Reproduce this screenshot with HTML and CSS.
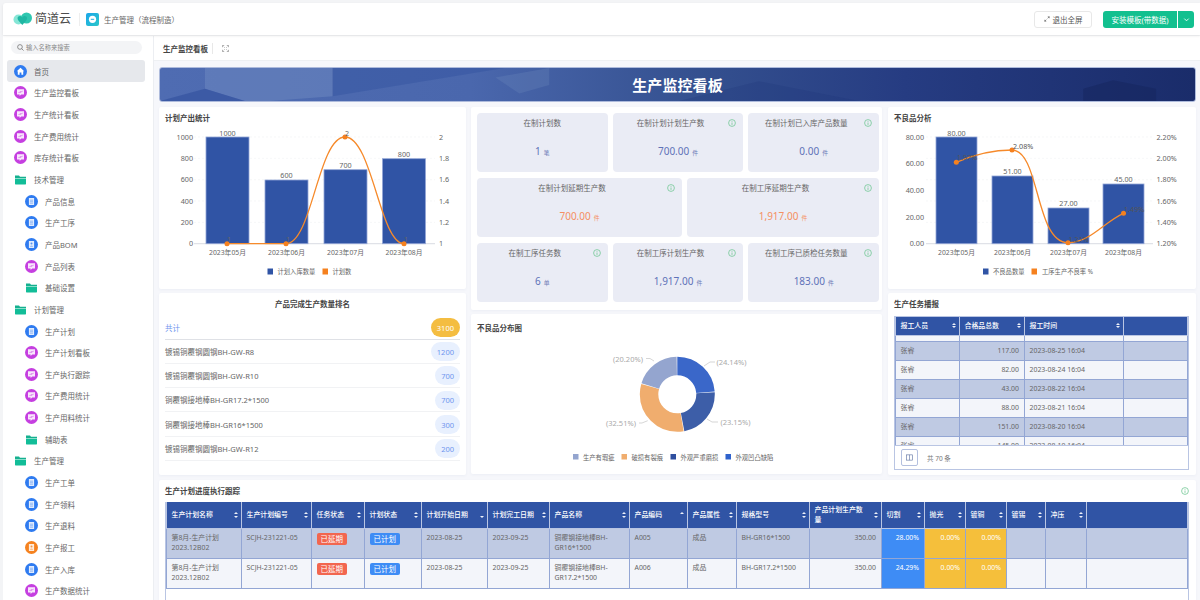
FILE: index.html
```html
<!DOCTYPE html>
<html lang="zh-CN">
<head>
<meta charset="utf-8">
<title>生产监控看板</title>
<link rel="stylesheet" href="styles.css">
</head>
<body>
<svg class="sprite" aria-hidden="true">
  <symbol id="i-home" viewBox="0 0 13 13"><circle cx="6.5" cy="6.5" r="6.5" fill="currentColor"/><path d="M6.5 2.8 10.2 6.2H9.2V9.8H7.4V7.6H5.6V9.8H3.8V6.2H2.8Z" fill="#fff"/></symbol>
  <symbol id="i-doc" viewBox="0 0 13 13"><circle cx="6.5" cy="6.5" r="6.5" fill="currentColor"/><path d="M3.9 3h5.2v7H3.9Z" fill="#fff" opacity=".85"/><path d="M5 5.2h3M5 6.7h3M5 8.2h3" stroke="currentColor" stroke-width=".6" opacity=".7"/></symbol>
  <symbol id="i-form" viewBox="0 0 13 13"><circle cx="6.5" cy="6.5" r="6.5" fill="currentColor"/><path d="M3.9 3h5.2v7H3.9Z" fill="#fff" opacity=".85"/><circle cx="6.5" cy="5.5" r="1" fill="currentColor" opacity=".8"/><path d="M4.9 8.6c.3-1.2 2.9-1.2 3.2 0Z" fill="currentColor" opacity=".8"/></symbol>
  <symbol id="i-screen" viewBox="0 0 13 13"><circle cx="6.5" cy="6.5" r="6.5" fill="currentColor"/><path d="M3 3.2h7v5.2H7.2L5.6 10V8.4H3Z" fill="#fff" opacity=".88"/><path d="M4.6 7 6 5.6l1 .8 1.6-1.6" fill="none" stroke="currentColor" stroke-width=".7"/></symbol>
  <symbol id="i-folder" viewBox="0 0 13 13"><path d="M1 2.6h4l1 1.2h6V5H1Z" fill="#15b08f"/><path d="M1 5.4h11v5.4a.6.6 0 0 1-.6.6H1.6a.6.6 0 0 1-.6-.6Z" fill="#12bd98"/></symbol>
  <symbol id="i-info" viewBox="0 0 8 8"><circle cx="4" cy="4" r="3.4" fill="none" stroke="#74c895" stroke-width=".8"/><path d="M4 3.5v2.4M4 2.2v.7" stroke="#74c895" stroke-width=".8"/></symbol>
</svg>

<header class="topbar">
  <svg class="logo" viewBox="0 0 19 14" aria-hidden="true"><circle cx="5.5" cy="7.500" r="5" fill="#86e6d6"/><circle cx="13.500" cy="6" r="5.500" fill="#2fc7b0"/><path d="M5.300 4.500c1.500-1.200 3.200-.4 4 1 .8-1.400 2.500-2.200 4-1 1.400 1.300.6 3.300-.5 4.400L9.300 13 5.800 8.900C4.700 7.800 3.900 5.800 5.300 4.500Z" fill="#1fb7a3"/></svg>
  <span class="brand">简道云</span>
  <span class="top-sep"></span>
  <svg class="app-icon" viewBox="0 0 13 13" aria-hidden="true"><defs><linearGradient id="appg" x1="0" y1="0" x2="1" y2="1"><stop offset="0" stop-color="#1aa6ea"/><stop offset="1" stop-color="#2bc7c9"/></linearGradient></defs><rect width="13" height="13" rx="2" fill="url(#appg)"/><circle cx="6.500" cy="6.300" r="3.600" fill="#fff"/><path d="M4.800 6.300h3.400" stroke="#1eaee0" stroke-width="1"/></svg>
  <span class="app-name">生产管理（流程制造）</span>
  <span class="top-fill"></span>
  <button class="btn-exit"><svg class="exit-ic" viewBox="0 0 8 8" aria-hidden="true"><path d="M1 7 3.200 4.800M1 5v2h2M7 1 4.800 3.200M7 3V1H5" fill="none" stroke="#555" stroke-width=".8"/></svg>退出全屏</button>
  <div class="btn-install"><span class="btn-main">安装模板(带数据)</span><span class="btn-more"><svg class="chev" viewBox="0 0 8 8" aria-hidden="true"><path d="M1.500 3 4 5.500 6.500 3" fill="none" stroke="#fff" stroke-width="1"/></svg></span></div>
</header>

<div class="shell">
  <aside class="sidebar">
    <div class="search"><svg class="search-ic" viewBox="0 0 8 8" aria-hidden="true"><circle cx="3.400" cy="3.400" r="2.700" fill="none" stroke="#666" stroke-width=".8"/><path d="M5.400 5.400 7.500 7.500" stroke="#666" stroke-width=".8"/></svg><span>输入名称来搜索</span></div>
    <nav class="nav">
      <a class="item active c-blue"><svg class="ic"><use href="#i-home"/></svg>首页</a>
      <a class="item c-purple"><svg class="ic"><use href="#i-screen"/></svg>生产监控看板</a>
      <a class="item c-purple"><svg class="ic"><use href="#i-screen"/></svg>生产统计看板</a>
      <a class="item c-purple"><svg class="ic"><use href="#i-screen"/></svg>生产费用统计</a>
      <a class="item c-purple"><svg class="ic"><use href="#i-screen"/></svg>库存统计看板</a>
      <a class="item"><svg class="ic"><use href="#i-folder"/></svg>技术管理</a>
      <a class="item sub c-blue"><svg class="ic"><use href="#i-doc"/></svg>产品信息</a>
      <a class="item sub c-blue"><svg class="ic"><use href="#i-doc"/></svg>生产工序</a>
      <a class="item sub c-blue"><svg class="ic"><use href="#i-form"/></svg>产品BOM</a>
      <a class="item sub c-purple"><svg class="ic"><use href="#i-screen"/></svg>产品列表</a>
      <a class="item sub"><svg class="ic"><use href="#i-folder"/></svg>基础设置</a>
      <a class="item"><svg class="ic"><use href="#i-folder"/></svg>计划管理</a>
      <a class="item sub c-blue"><svg class="ic"><use href="#i-doc"/></svg>生产计划</a>
      <a class="item sub c-purple"><svg class="ic"><use href="#i-screen"/></svg>生产计划看板</a>
      <a class="item sub c-purple"><svg class="ic"><use href="#i-screen"/></svg>生产执行跟踪</a>
      <a class="item sub c-purple"><svg class="ic"><use href="#i-screen"/></svg>生产费用统计</a>
      <a class="item sub c-purple"><svg class="ic"><use href="#i-screen"/></svg>生产用料统计</a>
      <a class="item sub"><svg class="ic"><use href="#i-folder"/></svg>辅助表</a>
      <a class="item"><svg class="ic"><use href="#i-folder"/></svg>生产管理</a>
      <a class="item sub c-blue"><svg class="ic"><use href="#i-doc"/></svg>生产工单</a>
      <a class="item sub c-blue"><svg class="ic"><use href="#i-doc"/></svg>生产领料</a>
      <a class="item sub c-blue"><svg class="ic"><use href="#i-doc"/></svg>生产退料</a>
      <a class="item sub c-orange"><svg class="ic"><use href="#i-form"/></svg>生产报工</a>
      <a class="item sub c-blue"><svg class="ic"><use href="#i-doc"/></svg>生产入库</a>
      <a class="item sub c-purple"><svg class="ic"><use href="#i-screen"/></svg>生产数据统计</a>
    </nav>
  </aside>

  <main class="main">
    <div class="crumb">
      <span class="crumb-title">生产监控看板</span>
      <span class="crumb-sep"></span>
      <svg class="fs-ic" viewBox="0 0 8 8" aria-hidden="true"><path d="M.5 2.500V.5h2M5.500.5h2v2M7.500 5.500v2h-2M2.500 7.500h-2v-2M2 2l1 1M6 2 5 3M6 6 5 5M2 6l1-1" fill="none" stroke="#777" stroke-width=".7"/></svg>
    </div>
    <div class="content">
      <div class="banner">
        <svg class="banner-art" viewBox="0 0 1037 35" preserveAspectRatio="none" aria-hidden="true">
          <path d="M45 0H173V30L110 35H85L45 22Z" fill="#7f98c8" opacity=".35"/>
          <path d="M0 35 45 22 85 35Z" fill="#3453a0" opacity=".7"/>
          <path d="M173 0H345L173 30Z" fill="#2f4f9e" opacity=".4"/>
          <path d="M336 10 390 0V18L360 27Z" fill="#7d95c6" opacity=".22"/>
          <path d="M925 35V22L955 13 998 22V35Z" fill="#15265f" opacity=".55"/>
          <path d="M520 35 600 14 700 35Z" fill="#1c3078" opacity=".22"/>
        </svg>
        <h1 class="banner-title">生产监控看板</h1>
      </div>

      <div class="dash">
        <div class="col">
          <section class="card card-chart">
            <h2 class="card-title">计划产出统计</h2>
            <svg class="chart" viewBox="159 124 307 165" role="img" aria-label="计划产出统计">
              <g class="grid"><path d="M194 137H435M194 158.300H435M194 179.700H435M194 201H435M194 222.400H435"/></g>
              <path class="axis" d="M194 243.700H435"/>
              <g class="bars">
                <rect x="206" y="137" width="43" height="106.700"/>
                <rect x="265" y="180" width="43" height="63.700"/>
                <rect x="324" y="169.700" width="43" height="74"/>
                <rect x="382.500" y="158.700" width="43" height="85"/>
              </g>
              <path class="line" d="M227 243.700H286C312 243.700 318 137 345 137C372 137 380 243.700 404 243.700"/>
              <g class="dots"><circle cx="227" cy="243.700" r="2.500"/><circle cx="286" cy="243.700" r="2.500"/><circle cx="345" cy="137" r="2.500"/><circle cx="404" cy="243.700" r="2.500"/></g>
              <g class="tx end"><text x="193" y="139.600">1000</text><text x="193" y="161">800</text><text x="193" y="182.300">600</text><text x="193" y="203.600">400</text><text x="193" y="225">200</text><text x="193" y="246.300">0</text></g>
              <g class="tx"><text x="439" y="139.600">2</text><text x="439" y="161">1.8</text><text x="439" y="182.300">1.6</text><text x="439" y="203.600">1.4</text><text x="439" y="225">1.2</text><text x="439" y="246.300">1</text></g>
              <g class="tx mid"><text x="227.500" y="135.500">1000</text><text x="286.500" y="178">600</text><text x="345.500" y="167.700">700</text><text x="404" y="156.700">800</text><text x="347" y="135.500">2</text><text x="229" y="242">1</text><text x="288" y="242">1</text><text x="406" y="242">1</text></g>
              <g class="tx mid xl"><text x="227.500" y="254.500">2023年05月</text><text x="286.500" y="254.500">2023年06月</text><text x="345.500" y="254.500">2023年07月</text><text x="404" y="254.500">2023年08月</text></g>
              <rect class="lg-blue" x="267.500" y="268.500" width="5.500" height="6"/><text class="tx lg" x="277.500" y="274">计划入库数量</text>
              <rect class="lg-orange" x="322.500" y="268.500" width="5.500" height="6"/><text class="tx lg" x="332.500" y="274">计划数</text>
            </svg>
          </section>

          <section class="card card-rank">
            <h2 class="card-title center">产品完成生产数量排名</h2>
            <ul class="rank">
              <li class="rank-row total"><span>共计</span><b class="pill gold">3100</b></li>
              <li class="rank-row"><span>镀锡铜覆钢圆钢BH-GW-R8</span><b class="pill">1200</b></li>
              <li class="rank-row"><span>镀锡铜覆钢圆钢BH-GW-R10</span><b class="pill">700</b></li>
              <li class="rank-row"><span>铜覆钢接地棒BH-GR17.2*1500</span><b class="pill">700</b></li>
              <li class="rank-row"><span>铜覆钢接地棒BH-GR16*1500</span><b class="pill">300</b></li>
              <li class="rank-row"><span>镀锡铜覆钢圆钢BH-GW-R12</span><b class="pill">200</b></li>
            </ul>
          </section>
        </div>

        <div class="col">
          <section class="card card-stats">
            <div class="tile-row">
              <div class="tile"><div class="tile-head"><span>在制计划数</span></div><div class="tile-val">1<small>笔</small></div></div>
              <div class="tile"><div class="tile-head"><span>在制计划计划生产数</span><svg class="info"><use href="#i-info"/></svg></div><div class="tile-val">700.00<small>件</small></div></div>
              <div class="tile"><div class="tile-head"><span>在制计划已入库产品数量</span><svg class="info"><use href="#i-info"/></svg></div><div class="tile-val">0.00<small>件</small></div></div>
            </div>
            <div class="tile-row">
              <div class="tile wide-a warn"><div class="tile-head"><span>在制计划延期生产数</span><svg class="info"><use href="#i-info"/></svg></div><div class="tile-val">700.00<small>件</small></div></div>
              <div class="tile wide-b warn"><div class="tile-head"><span>在制工序延期生产数</span><svg class="info"><use href="#i-info"/></svg></div><div class="tile-val">1,917.00<small>件</small></div></div>
            </div>
            <div class="tile-row">
              <div class="tile"><div class="tile-head"><span>在制工序任务数</span><svg class="info"><use href="#i-info"/></svg></div><div class="tile-val">6<small>单</small></div></div>
              <div class="tile"><div class="tile-head"><span>在制工序计划生产数</span><svg class="info"><use href="#i-info"/></svg></div><div class="tile-val">1,917.00<small>件</small></div></div>
              <div class="tile"><div class="tile-head"><span>在制工序已质检任务数量</span><svg class="info"><use href="#i-info"/></svg></div><div class="tile-val">183.00<small>件</small></div></div>
            </div>
          </section>

          <section class="card card-pie">
            <h2 class="card-title">不良品分布图</h2>
            <svg class="chart" viewBox="471 338 411 137" role="img" aria-label="不良品分布图">
              <g class="donut">
                <circle class="s1" cx="677.300" cy="395.300" r="28.250" pathLength="100"/>
                <circle class="s2" cx="677.300" cy="395.300" r="28.250" pathLength="100"/>
                <circle class="s3" cx="677.300" cy="395.300" r="28.250" pathLength="100"/>
                <circle class="s4" cx="677.300" cy="395.300" r="28.250" pathLength="100"/>
              </g>
              <path class="leader" d="M704 367 710 363H715M707 420 712 423H718M647.700 421.700 642 424H639M654 362 650 359.500H646"/>
              <g class="tx pct"><text x="716.500" y="365.500">(24.14%)</text><text x="720.500" y="425.500">(23.15%)</text><text x="606" y="427">(32.51%)</text><text x="613" y="362.500">(20.20%)</text></g>
              <rect class="lg-a" x="573" y="455" width="5.500" height="5.500"/><text class="tx lg" x="583" y="460.500">生产有瑕疵</text>
              <rect class="lg-b" x="621.500" y="455" width="5.500" height="5.500"/><text class="tx lg" x="631.500" y="460.500">破损有裂痕</text>
              <rect class="lg-c" x="670.500" y="455" width="5.500" height="5.500"/><text class="tx lg" x="680.500" y="460.500">外观严重磨损</text>
              <rect class="lg-d" x="725.500" y="455" width="5.500" height="5.500"/><text class="tx lg" x="735.500" y="460.500">外观凹凸缺陷</text>
            </svg>
          </section>
        </div>

        <div class="col col-right">
          <section class="card card-chart">
            <h2 class="card-title">不良品分析</h2>
            <svg class="chart" viewBox="888 124 308 165" role="img" aria-label="不良品分析">
              <g class="grid"><path d="M926 137H1153M926 158.300H1153M926 179.700H1153M926 201H1153M926 222.400H1153"/></g>
              <path class="axis" d="M926 243.700H1153"/>
              <g class="bars">
                <rect x="936" y="137" width="41" height="106.700"/>
                <rect x="992" y="176" width="41" height="67.700"/>
                <rect x="1048" y="208" width="41" height="35.700"/>
                <rect x="1103" y="184" width="41" height="59.700"/>
              </g>
              <path class="line" d="M956.300 162.300C980 152 998 150 1012 150C1040 150 1035 242.700 1068 242.700C1090 242.700 1104 222 1123.500 213.300"/>
              <g class="dots"><circle cx="956.300" cy="162.300" r="2.500"/><circle cx="1012" cy="150" r="2.500"/><circle cx="1068" cy="242.700" r="2.500"/><circle cx="1123.500" cy="213.300" r="2.500"/></g>
              <g class="tx end"><text x="924" y="139.600">80.00</text><text x="924" y="166.300">60.00</text><text x="924" y="193">40.00</text><text x="924" y="219.600">20.00</text><text x="924" y="246.300">0.00</text></g>
              <g class="tx"><text x="1156.500" y="139.600">2.20%</text><text x="1156.500" y="161">2.00%</text><text x="1156.500" y="182.300">1.80%</text><text x="1156.500" y="203.600">1.60%</text><text x="1156.500" y="225">1.40%</text><text x="1156.500" y="246.300">1.20%</text></g>
              <g class="tx mid"><text x="956.500" y="135.500">80.00</text><text x="1012.500" y="174">51.00</text><text x="1068.500" y="206">27.00</text><text x="1123.500" y="182">45.00</text></g>
              <g class="tx dk"><text x="957" y="160">1.97%</text><text x="1013" y="148.500">2.08%</text><text x="1068.500" y="241.500">1.21%</text><text x="1124" y="211.500">1.49%</text></g>
              <g class="tx mid xl"><text x="956.500" y="254.500">2023年05月</text><text x="1012.500" y="254.500">2023年06月</text><text x="1068.500" y="254.500">2023年07月</text><text x="1123.500" y="254.500">2023年08月</text></g>
              <rect class="lg-blue" x="983" y="268.500" width="5.500" height="6"/><text class="tx lg" x="993" y="274">不良品数量</text>
              <rect class="lg-orange" x="1031.500" y="268.500" width="5.500" height="6"/><text class="tx lg" x="1042" y="274">工序生产不良率 %</text>
            </svg>
          </section>

          <section class="card card-report">
            <h2 class="card-title">生产任务播报</h2>
            <div class="report-box">
              <div class="report-scroll">
                <table class="dt report">
                  <colgroup><col class="r1"><col class="r2"><col class="r3"><col></colgroup>
                  <thead><tr><th><div class="th"><span>报工人员</span><i class="sort"></i></div></th><th><div class="th"><span>合格品总数</span><i class="sort"></i></div></th><th><div class="th"><span>报工时间</span><i class="sort"></i></div></th><th></th></tr></thead>
                  <tbody>
                    <tr class="stub"><td></td><td></td><td></td><td></td></tr>
                    <tr class="dark"><td>张睿</td><td class="num">117.00</td><td>2023-08-25 16:04</td><td></td></tr>
                    <tr><td>张睿</td><td class="num">82.00</td><td>2023-08-24 16:04</td><td></td></tr>
                    <tr class="dark"><td>张睿</td><td class="num">43.00</td><td>2023-08-22 16:04</td><td></td></tr>
                    <tr><td>张睿</td><td class="num">88.00</td><td>2023-08-21 16:04</td><td></td></tr>
                    <tr class="dark"><td>张睿</td><td class="num">151.00</td><td>2023-08-20 16:04</td><td></td></tr>
                    <tr><td>张睿</td><td class="num">145.00</td><td>2023-08-19 16:04</td><td></td></tr>
                  </tbody>
                </table>
              </div>
              <div class="report-foot"><span class="col-btn"><svg class="col-ic" viewBox="0 0 8 8" aria-hidden="true"><rect x=".5" y="1" width="7" height="6" fill="none" stroke="#5a6f9f" stroke-width=".7"/><path d="M4 1v6" stroke="#5a6f9f" stroke-width=".7"/></svg></span><span class="foot-text">共 70 条</span></div>
            </div>
          </section>
        </div>
      </div>

      <section class="card card-plan">
        <div class="plan-head"><h2 class="card-title">生产计划进度执行跟踪</h2><svg class="info plan-info"><use href="#i-info"/></svg></div>
        <div class="plan-box">
          <table class="dt plan">
            <colgroup><col class="p1"><col class="p2"><col class="p3"><col class="p4"><col class="p5"><col class="p6"><col class="p7"><col class="p8"><col class="p9"><col class="p10"><col class="p11"><col class="p12"><col class="p13"><col class="p14"><col class="p15"><col class="p16"><col></colgroup>
            <thead><tr>
              <th><div class="th"><span>生产计划名称</span><i class="sort"></i></div></th>
              <th><div class="th"><span>生产计划编号</span><i class="sort"></i></div></th>
              <th><div class="th"><span>任务状态</span><i class="sort"></i></div></th>
              <th><div class="th"><span>计划状态</span><i class="sort"></i></div></th>
              <th><div class="th"><span>计划开始日期</span><i class="sort down"></i></div></th>
              <th><div class="th"><span>计划完工日期</span><i class="sort"></i></div></th>
              <th><div class="th"><span>产品名称</span><i class="sort"></i></div></th>
              <th><div class="th"><span>产品编码</span><i class="sort up"></i></div></th>
              <th><div class="th"><span>产品属性</span><i class="sort"></i></div></th>
              <th><div class="th"><span>规格型号</span><i class="sort"></i></div></th>
              <th><div class="th"><span class="th-wrap">产品计划生产数量</span><i class="sort"></i></div></th>
              <th><div class="th"><span>切割</span><i class="sort"></i></div></th>
              <th><div class="th"><span>抛光</span><i class="sort"></i></div></th>
              <th><div class="th"><span>镀铜</span><i class="sort"></i></div></th>
              <th><div class="th"><span>镀锡</span><i class="sort"></i></div></th>
              <th><div class="th"><span>冲压</span><i class="sort"></i></div></th>
              <th></th>
            </tr></thead>
            <tbody>
              <tr class="dark"><td>第8月-生产计划<br>2023.12B02</td><td>SCJH-231221-05</td><td><span class="tag red">已延期</span></td><td><span class="tag blue">已计划</span></td><td>2023-08-25</td><td>2023-09-25</td><td>铜覆钢接地棒BH-GR16*1500</td><td>A005</td><td>成品</td><td>BH-GR16*1500</td><td class="num">350.00</td><td class="num fill-blue">28.00%</td><td class="num fill-yellow">0.00%</td><td class="num fill-yellow">0.00%</td><td></td><td></td><td></td></tr>
              <tr><td>第8月-生产计划<br>2023.12B02</td><td>SCJH-231221-05</td><td><span class="tag red">已延期</span></td><td><span class="tag blue">已计划</span></td><td>2023-08-25</td><td>2023-09-25</td><td>铜覆钢接地棒BH-GR17.2*1500</td><td>A006</td><td>成品</td><td>BH-GR17.2*1500</td><td class="num">350.00</td><td class="num fill-blue">24.29%</td><td class="num fill-yellow">0.00%</td><td class="num fill-yellow">0.00%</td><td></td><td></td><td></td></tr>
            </tbody>
          </table>
        </div>
      </section>
    </div>
  </main>
</div>
</body>
</html>
```
FILE: styles.css
```css
* { box-sizing: border-box; }
html, body { margin: 0; height: 600px; overflow: hidden; }
body {
  padding: 3px 0 0 3px;
  background: #f3f4f6;
  font-family: "Noto Sans", "Noto Sans CJK SC", sans-serif;
  font-size: 7.5px;
  color: #666;
}
.sprite { display: none; }
h1, h2, ul { margin: 0; padding: 0; }

/* top bar */
.topbar {
  position: relative;
  z-index: 2;
  display: flex;
  align-items: center;
  height: 32px;
  padding-left: 10px;
  background: #fff;
  border-radius: 3px 0 0 0;
  box-shadow: 0 1px 3px rgba(0, 0, 0, .08);
}
.logo { width: 19px; height: 14px; flex: none; }
.brand { margin-left: 3px; font-size: 12px; line-height: 16px; color: #4c4c4c; }
.top-sep { width: 1px; height: 13px; margin: 0 6px 0 8px; background: #eee; }
.app-icon { width: 13px; height: 13px; flex: none; }
.app-name { margin-left: 5px; color: #666; }
.top-fill { flex: 1; }
.btn-exit {
  display: flex;
  align-items: center;
  justify-content: center;
  gap: 3px;
  width: 58px;
  height: 17px;
  padding: 0;
  background: #fff;
  border: 1px solid #e8e8e8;
  border-radius: 3px;
  font: inherit;
  color: #555;
}
.exit-ic { width: 6px; height: 6px; }
.btn-install {
  display: flex;
  gap: 1px;
  height: 17px;
  margin: 0 6px 0 11px;
  color: #fff;
}
.btn-main {
  display: flex;
  align-items: center;
  justify-content: center;
  width: 74px;
  background: #12c08f;
  border-radius: 3px 0 0 3px;
}
.btn-more {
  display: flex;
  align-items: center;
  justify-content: center;
  width: 16px;
  background: #12c08f;
  border-radius: 0 3px 3px 0;
}
.chev { width: 7px; height: 7px; }

/* shell */
.shell { display: flex; height: 565px; margin-top: 1px; }

/* sidebar */
.sidebar {
  width: 151px;
  flex: none;
  padding-top: 5px;
  background: #fff;
  border-right: 1px solid #eceef2;
  overflow: hidden;
}
.search {
  display: flex;
  align-items: center;
  gap: 2px;
  width: 131px;
  height: 13px;
  margin: 0 0 6.300px 8px;
  padding-left: 6px;
  background: #f3f4f6;
  border-radius: 7px;
  font-size: 6.250px;
  color: #888;
}
.search-ic { width: 7px; height: 7px; }
.nav { margin: 0 8px 0 4px; }
.item {
  display: flex;
  align-items: center;
  gap: 7.500px;
  height: 21.670px;
  padding-left: 6.500px;
  border-radius: 3px;
  color: #666;
}
.item.active { background: #e6e8ec; }
.item.sub { padding-left: 17.500px; }
.ic { width: 13px; height: 13px; flex: none; }
.c-blue .ic { color: #2f7bf0; }
.c-purple .ic { color: #c53fe0; }
.c-orange .ic { color: #f5821f; }

/* main */
.main { flex: 1; min-width: 0; background: #f6f7fb; }
.crumb {
  display: flex;
  align-items: center;
  height: 25px;
  padding-left: 9px;
  background: #fff;
  border-bottom: 1px solid #eef0f3;
}
.crumb-title { font-weight: 700; color: #444; }
.crumb-sep { width: 1px; height: 11px; margin: 0 9px 0 4px; background: #e8e8e8; }
.fs-ic { width: 7px; height: 7px; }
.content { padding: 6px 4px 0 5px; }

.banner {
  position: relative;
  display: flex;
  align-items: center;
  justify-content: center;
  height: 35px;
  background: linear-gradient(90deg, #4f6cb2 0, #4a67ad 30%, #34508f 52%, #263c82 72%, #1a2c6a 100%);
  border: 1px solid #aebbdc;
  border-radius: 3px;
  overflow: hidden;
}
.banner-art { position: absolute; inset: 0; width: 100%; height: 100%; }
.banner-title { position: relative; font-size: 15px; line-height: 20px; font-weight: 700; color: #fff; letter-spacing: .1px; }

.dash {
  display: grid;
  grid-template-columns: 307px 411px 1fr;
  column-gap: 5px;
  margin-top: 5px;
  height: 368px;
}
.col { display: flex; flex-direction: column; gap: 4px; min-width: 0; }
.col-right { margin-left: 1px; }
.card {
  background: #fff;
  border-radius: 2px;
  box-shadow: 0 1px 3px rgba(60, 80, 140, .05);
}
.card-title {
  padding: 6px;
  font-size: 7.500px;
  line-height: 11px;
  font-weight: 700;
  color: #444;
}
.card-title.center { text-align: center; }
.card-chart { height: 182px; overflow: hidden; }
.card-chart .card-title { padding-bottom: 0; }
.chart { display: block; width: 100%; }
.card-chart .chart { height: 165px; }

/* svg chart text */
.tx text, text.tx { font-size: 7.200px; fill: #666; }
.xl text { font-size: 6.800px; }
text.lg { font-size: 6.300px; }
.dk text { fill: #555; }
.end text { text-anchor: end; }
.mid text { text-anchor: middle; }
.pct text { font-size: 7.500px; fill: #aaa; }
.grid path { stroke: #f0f1f4; stroke-width: .6; stroke-dasharray: 2 2; fill: none; }
.axis { stroke: #e0e2e8; stroke-width: 1.200; fill: none; }
.bars rect { fill: #3054a5; stroke: #93a6d6; stroke-width: .8; }
.line { fill: none; stroke: #f68a2b; stroke-width: 1.300; }
.dots circle { fill: #f5811f; }
.lg-blue { fill: #3054a5; }
.lg-orange { fill: #f5811f; }

/* rank */
.card-rank { height: 182px; }
.rank { list-style: none; margin: 2px 6px 0; }
.rank-row {
  display: flex;
  align-items: center;
  justify-content: space-between;
  height: 24.300px;
  border-bottom: 1px solid #f1f2f4;
  color: #666;
}
.rank-row.total {
  height: 21.500px;
  border-bottom: 1.500px solid #dfe1e6;
  color: #6f95ee;
  padding-bottom: 2px;
}
.pill {
  display: flex;
  align-items: center;
  justify-content: center;
  height: 19px;
  padding: 0 6px;
  margin-top: 1px;
  background: #e8f0fe;
  border-radius: 10px;
  font-weight: 400;
  color: #6f95ee;
}
.pill.gold { background: #f4bd41; color: #fff; }

/* stats */
.card-stats { height: 203px; padding: 6px 3px 0 6px; display: flex; flex-direction: column; gap: 6px; }
.tile-row { display: flex; gap: 5px; height: 59px; }
.tile { flex: 1; min-width: 0; padding-top: 4.500px; background: #eaecf5; border-radius: 4px; }
.tile.wide-a { flex: 205 0 0; }
.tile.wide-b { flex: 192 0 0; }
.tile-head { display: flex; align-items: center; height: 11px; line-height: 11px; color: #666; }
.tile-head span { flex: 1; text-align: center; }
.info { width: 8px; height: 8px; flex: none; }
.tile-head .info { margin-right: 7px; }
.tile-val {
  margin-top: 15.500px;
  text-align: center;
  font-size: 10px;
  line-height: 14px;
  color: #5f72b8;
}
.tile-val small { margin-left: 3px; font-size: 5.800px; color: #6a7ab5; }
.warn .tile-val, .warn .tile-val small { color: #f58f62; }

/* donut */
.card-pie { height: 160px; }
.card-pie .card-title { padding: 9px 6px 3px; }
.card-pie .chart { height: 137px; }
.donut circle { fill: none; stroke-width: 18.500; transform-box: fill-box; transform-origin: center; transform: rotate(-90deg); }
.s1 { stroke: #3a67c9; stroke-dasharray: 23.840 76.160; stroke-dashoffset: 0; }
.s2 { stroke: #3d5ea8; stroke-dasharray: 22.850 77.150; stroke-dashoffset: -24.140; }
.s3 { stroke: #f0ad6e; stroke-dasharray: 32.210 67.790; stroke-dashoffset: -47.290; }
.s4 { stroke: #94a5cf; stroke-dasharray: 19.900 80.100; stroke-dashoffset: -79.800; }
.leader { fill: none; stroke: #bbb; stroke-width: .6; }
.lg-a { fill: #94a5cf; }
.lg-b { fill: #f0ad6e; }
.lg-c { fill: #2f4f9f; }
.lg-d { fill: #2f62cc; }

/* data tables */
.dt { border-collapse: collapse; table-layout: fixed; width: 100%; font-size: 6.900px; }
.dt th {
  height: 18px;
  padding: 0 3px 0 4.500px;
  background: #3054a5;
  border: 1px solid #b9c5e3;
  border-top: 0;
  font-weight: 500;
  text-align: left;
  color: #fff;
  line-height: 10px;
}
.th { display: flex; align-items: center; justify-content: space-between; gap: 2px; }
.th-wrap { max-width: 50px; }
.sort { position: relative; display: block; width: 4px; height: 6px; flex: none; }
.sort::before, .sort::after {
  content: "";
  position: absolute;
  left: 0;
  border-left: 2px solid transparent;
  border-right: 2px solid transparent;
}
.sort::before { top: .300px; border-bottom: 2.500px solid #eef1f9; }
.sort::after { bottom: .300px; border-top: 2.500px solid #eef1f9; }
.sort.down::before { display: none; }
.sort.up::after { display: none; }
.dt td {
  padding: 0 5px 0 4.500px;
  background: #f3f5fa;
  border: 1px solid #93a6d4;
  color: #666;
}
.dt .dark td { background: #bfcae3; }
.dt .num { text-align: right; }

/* report table */
.card-report { height: 182px; }
.report-box { margin: 0 7px 0 6px; }
.report-scroll { height: 129px; overflow: hidden; border-left: 1px solid #b9c5e3; border-right: 1px solid #b9c5e3; border-top: 1px solid #b9c5e3; }
.r1 { width: 64px; }
.r2 { width: 65px; }
.r3 { width: 99px; }
.report td { height: 19px; line-height: 10px; white-space: nowrap; }
.report .stub td { height: 6px; }
.report-foot {
  display: flex;
  align-items: center;
  height: 25px;
  padding-left: 6px;
  background: #fff;
  border: 1px solid #b9c5e3;
}
.col-btn {
  display: flex;
  align-items: center;
  justify-content: center;
  width: 17px;
  height: 17px;
  border: 1px solid #b4c0df;
  border-radius: 2px;
}
.col-ic { width: 7px; height: 7px; }
.foot-text { margin-left: 9px; font-size: 6.500px; color: #777; }

/* plan table */
.card-plan { margin-top: 5px; height: 125px; }
.plan-head { display: flex; align-items: center; justify-content: space-between; height: 22.300px; }
.plan-info { margin-right: 7px; }
.plan-box {
  height: 98px;
  margin: 0 7px 0 6px;
  border-left: 1px solid #b9c5e3;
  border-right: 1px solid #b9c5e3;
}
.plan th { height: 26px; }
.plan td { height: 30px; padding-top: 4px; vertical-align: top; line-height: 10.500px; }
.p1 { width: 75px; }
.p2 { width: 70px; }
.p3 { width: 53px; }
.p4 { width: 57px; }
.p5 { width: 66px; }
.p6 { width: 62px; }
.p7 { width: 80px; }
.p8 { width: 58px; }
.p9 { width: 49px; }
.p10 { width: 73px; }
.p11 { width: 72px; }
.p12 { width: 43px; }
.p13 { width: 41px; }
.p14 { width: 41px; }
.p15 { width: 39px; }
.p16 { width: 41px; }
.tag {
  display: block;
  width: 30.500px;
  height: 12.500px;
  line-height: 12.500px;
  font-size: 7.500px;
  text-align: center;
  border-radius: 2px;
  color: #fff;
}
.tag.red { background: #f2664f; }
.tag.blue { background: #3e8cf5; }
.dt td.fill-blue { background: #3e8cf5; color: #fff; }
.dt td.fill-yellow { background: #f5bf3b; color: #fff; }
```
